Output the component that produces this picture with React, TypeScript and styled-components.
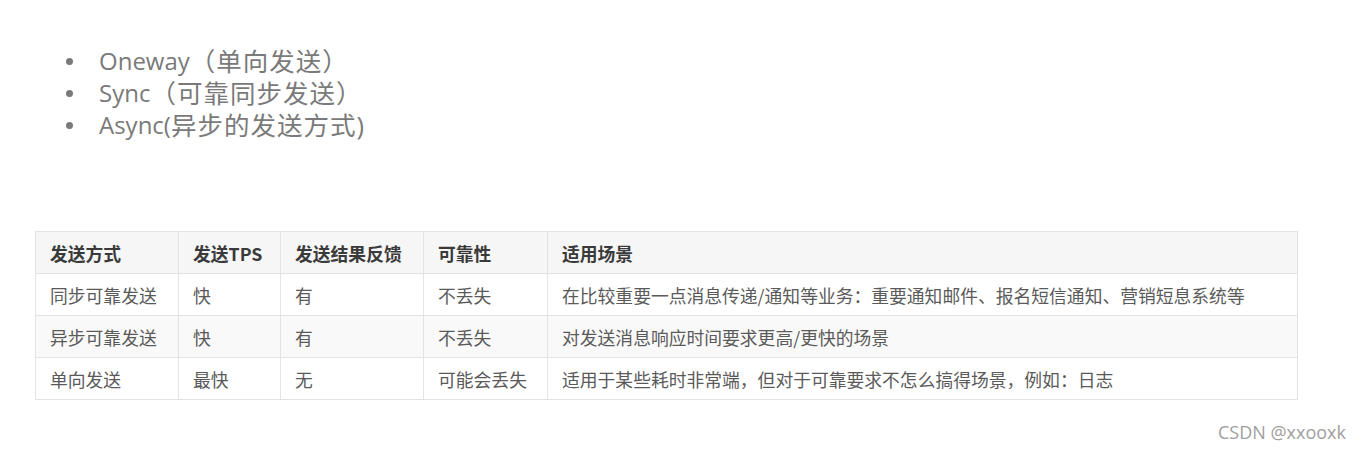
import React from "react";
import styled, { createGlobalStyle } from "styled-components";

const GlobalStyle = createGlobalStyle`
  html, body {
    margin: 0;
    padding: 0;
    background: #ffffff;
  }
  body {
    font-family: "Open Sans", "Noto Sans CJK SC", sans-serif;
  }
`;

const Page = styled.div`
  width: 1361px;
  height: 449px;
  box-sizing: border-box;
  padding: 45px 64px 0 35px;
  display: flex;
  flex-direction: column;
  overflow: hidden;
`;

const BulletList = styled.ul`
  list-style: none;
  margin: 0;
  padding: 0 0 0 31px;
  display: flex;
  flex-direction: column;
`;

const BulletItem = styled.li`
  display: flex;
  align-items: center;
  height: 32px;
  line-height: 32px;
  font-family: "Open Sans", "Noto Sans CJK SC", sans-serif;
  font-size: 24px;
  color: #7a7a7a;
  white-space: nowrap;
`;

const Cjk = styled.span`
  font-size: 25.5px;
  letter-spacing: 1px;
`;

const Dot = styled.span`
  width: 7px;
  height: 7px;
  border-radius: 50%;
  background: #7a7a7a;
  margin-right: 26px;
  flex: none;
`;

const Table = styled.table`
  margin-top: 90px;
  width: 1262px;
  border-collapse: collapse;
  table-layout: fixed;
  font-family: "Noto Sans CJK SC", "Microsoft YaHei", sans-serif;
  font-size: 17.8px;
  border: 1px solid #e3e3e3;
`;

const HeadCell = styled.th<{ $w: number }>`
  width: ${(p) => p.$w}px;
  height: 42px;
  padding: 0 0 0 14px;
  text-align: left;
  font-weight: 700;
  color: #3a3a3a;
  background: #f6f6f6;
  border: 1px solid #e3e3e3;
  box-sizing: border-box;
  white-space: nowrap;
`;

const Row = styled.tr<{ $striped?: boolean }>`
  background: ${(p) => (p.$striped ? "#f9f9f9" : "#ffffff")};
`;

const Cell = styled.td`
  height: 42px;
  padding: 0 0 0 14px;
  color: #5a5a5a;
  border: 1px solid #e3e3e3;
  box-sizing: border-box;
  white-space: nowrap;
`;

const Footer = styled.div`
  margin-top: 20px;
  align-self: flex-end;
  margin-right: -49px;
  font-family: "Open Sans", sans-serif;
  font-size: 18px;
  color: #a0a0a0;
`;

const columns = [
  { title: "发送方式", w: 143 },
  { title: "发送TPS", w: 102 },
  { title: "发送结果反馈", w: 143 },
  { title: "可靠性", w: 124 },
  { title: "适用场景", w: 750 },
];

const rows = [
  ["同步可靠发送", "快", "有", "不丢失", "在比较重要一点消息传递/通知等业务：重要通知邮件、报名短信通知、营销短息系统等"],
  ["异步可靠发送", "快", "有", "不丢失", "对发送消息响应时间要求更高/更快的场景"],
  ["单向发送", "最快", "无", "可能会丢失", "适用于某些耗时非常端，但对于可靠要求不怎么搞得场景，例如：日志"],
];

const bullets = [
  { en: "Oneway", zh: "（单向发送）" },
  { en: "Sync", zh: "（可靠同步发送）" },
  { en: "Async(", zh: "异步的发送方式)" },
];

export default function App() {
  return (
    <>
      <GlobalStyle />
      <Page>
        <BulletList>
          {bullets.map((b) => (
            <BulletItem key={b.en}>
              <Dot />
              {b.en}
              <Cjk>{b.zh}</Cjk>
            </BulletItem>
          ))}
        </BulletList>
        <Table>
          <thead>
            <tr>
              {columns.map((c) => (
                <HeadCell key={c.title} $w={c.w}>
                  {c.title}
                </HeadCell>
              ))}
            </tr>
          </thead>
          <tbody>
            {rows.map((r, i) => (
              <Row key={i} $striped={i === 1}>
                {r.map((v, j) => (
                  <Cell key={j}>{v}</Cell>
                ))}
              </Row>
            ))}
          </tbody>
        </Table>
        <Footer>CSDN @xxooxk</Footer>
      </Page>
    </>
  );
}
